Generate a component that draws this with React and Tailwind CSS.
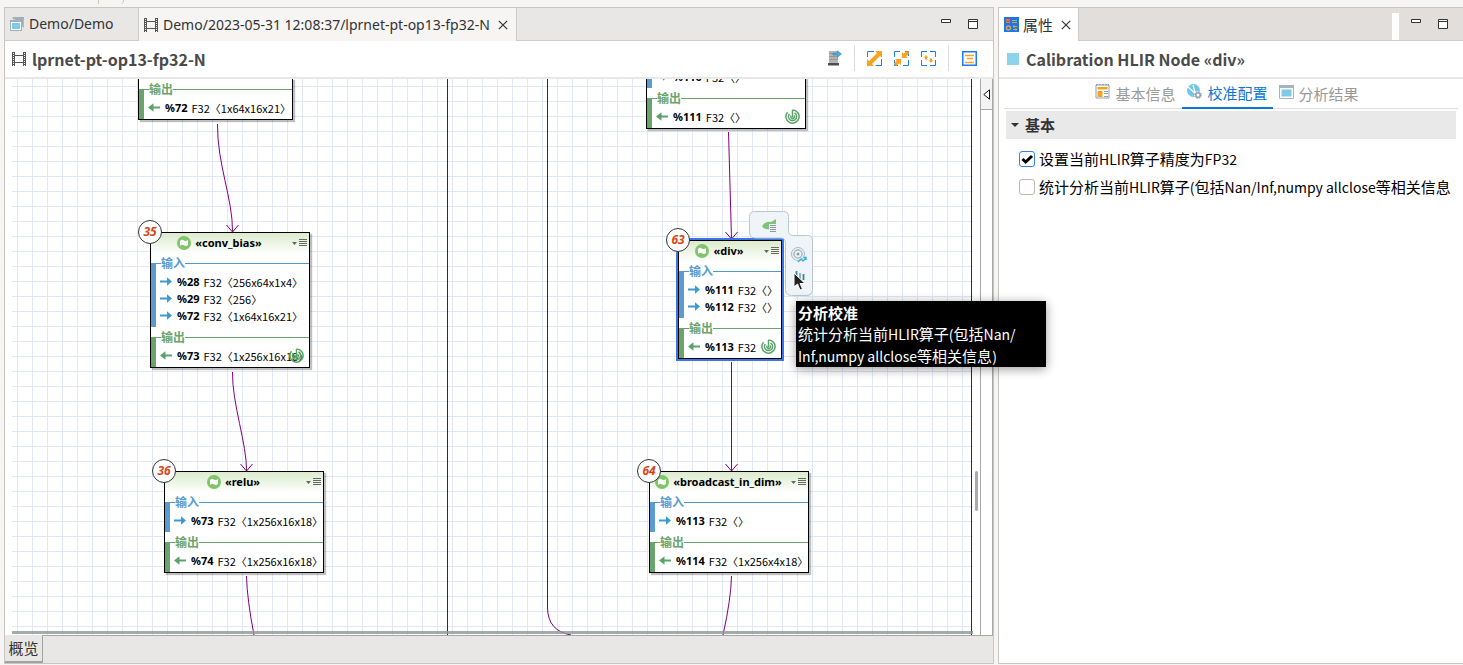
import React from 'react';

const nodes = [
  {
    id: 'n34', x: 126, y: -1, w: 155,
    inputs: [],
    outputs: [{ ref: '%72', type: 'F32', shape: '〈1x64x16x21〉' }],
  },
  {
    id: 'n35', x: 138, y: 153, w: 160, index: 35, title: '«conv_bias»', calibrated: true,
    inputs: [
      { ref: '%28', type: 'F32', shape: '〈256x64x1x4〉' },
      { ref: '%29', type: 'F32', shape: '〈256〉' },
      { ref: '%72', type: 'F32', shape: '〈1x64x16x21〉' },
    ],
    outputs: [{ ref: '%73', type: 'F32', shape: '〈1x256x16x18〉' }],
  },
  {
    id: 'n36', x: 152, y: 392, w: 160, index: 36, title: '«relu»',
    inputs: [{ ref: '%73', type: 'F32', shape: '〈1x256x16x18〉' }],
    outputs: [{ ref: '%74', type: 'F32', shape: '〈1x256x16x18〉' }],
  },
  {
    id: 'n62', x: 634, y: -22, w: 160, calibrated: true,
    inputs: [{ ref: '%110', type: 'F32', shape: '〈〉' }],
    outputs: [{ ref: '%111', type: 'F32', shape: '〈〉' }],
  },
  {
    id: 'n63', x: 666, y: 161, w: 104, index: 63, title: '«div»', calibrated: true, selected: true,
    inputs: [
      { ref: '%111', type: 'F32', shape: '〈〉' },
      { ref: '%112', type: 'F32', shape: '〈〉' },
    ],
    outputs: [{ ref: '%113', type: 'F32', shape: '' }],
  },
  {
    id: 'n64', x: 637, y: 392, w: 160, index: 64, title: '«broadcast_in_dim»',
    inputs: [{ ref: '%113', type: 'F32', shape: '〈〉' }],
    outputs: [{ ref: '%114', type: 'F32', shape: '〈1x256x4x18〉' }],
  },
];

// Latin runs are set a size below the Chinese text around them
const Latin = ({ children }) => <span className="text-[14px]">{children}</span>;

const FilmIcon = () => (
  <svg className="h-[14px] w-[14px] shrink-0" viewBox="0 0 14 14" fill="none" stroke="#555">
    <path d="M1.5 0v14M12.5 0v14" strokeWidth="3" />
    <path d="M1.5 1v13M12.5 1v13" stroke="#fff" strokeWidth="1" strokeDasharray="1 1" />
    <path d="M3 3.5h8M3 10.5h8" />
  </svg>
);

const WindowIcon = () => (
  <svg className="h-[14px] w-[14px] shrink-0" viewBox="0 0 14 14">
    <path d="M3 .5h10.500v10M3 2V0h11v2z" fill="#9fb0bb" stroke="#9fb0bb" strokeWidth=".6" />
    <rect x=".5" y="3.500" width="11" height="10" fill="#fff" stroke="#9fb0bb" />
    <path d="M0 3h12v2H0z" fill="#9fb0bb" />
    <path d="M2 6h8v6H2z" fill="#7dcbe6" />
  </svg>
);

const CloseIcon = () => (
  <svg className="h-[10px] w-[10px]" viewBox="0 0 10 10" stroke="#333" strokeWidth="1.2">
    <path d="M.8.8l8.400 8.400M9.200.8L.8 9.200" />
  </svg>
);

const PanelButtons = () => (
  <div className="flex items-center gap-[17px]">
    <button aria-label="Minimize" className="flex h-4 w-[10px] items-start pt-[3px]">
      <svg className="h-1 w-[10px]" viewBox="0 0 10 4" fill="#fff" stroke="#333">
        <path d="M.5.5h9v3h-9z" />
      </svg>
    </button>
    <button aria-label="Maximize" className="flex h-4 w-[10px] items-start pt-[3px]">
      <svg className="h-[10px] w-[10px]" viewBox="0 0 10 10" fill="#fff" stroke="#333">
        <path d="M.5.5h9v9h-9zM.5 2.500h9" />
      </svg>
    </button>
  </div>
);

const SpiralIcon = () => (
  <svg className="h-[15px] w-[15px]" viewBox="0 0 15 15" fill="none" stroke="#5aa46a" strokeWidth="1.500">
    <path d="M7.500.9A6.600 6.600 0 1 1 2.500 3.200" />
    <path d="M7.500.9V8.500" />
    <path d="M9.500 3.900A4.100 4.100 0 1 1 4.300 5" />
    <path d="M9 6.500a1.800 1.800 0 1 1-2.800.2" />
  </svg>
);

const ArrowIcon = ({ out }) => (
  <svg className="h-[9px] w-3 shrink-0" viewBox="0 0 12 9">
    {out ? (
      <path d="M12 3.500H5.500V.3L0 4.500l5.500 4.200V5.500H12z" fill="#5aa46a" />
    ) : (
      <path d="M0 3.500h7V.3l5 4.200-5 4.200V5.500H0z" fill="#3a9ad2" />
    )}
  </svg>
);

const Section = ({ label, items, out }) => (
  <div className={`relative border-t pt-[9px] pb-[3px] pl-2 ${out ? 'border-[#6aa36c]' : 'border-[#4f98cf]'}`}>
    <div className={`absolute -top-px bottom-0 left-0 w-[5px] ${out ? 'bg-[#6aa36c]' : 'bg-[#5a9bd3]'}`} />
    {label && (
      <span className={`absolute -top-[9px] left-[10px] bg-white text-[12px] leading-4 font-bold ${out ? 'text-[#6aa36c]' : 'text-[#5a9bd3]'}`}>
        {label}
      </span>
    )}
    {items.map((item) => (
      <div key={item.ref} className="flex h-[17px] items-center whitespace-nowrap pl-px">
        <ArrowIcon out={out} />
        <span className="ml-[5px] font-['Noto_Sans',sans-serif] text-[11px] leading-4 font-bold text-black">{item.ref}</span>
        <span className="ml-1 pt-px text-[11px] leading-[14px] text-black">{item.type}{item.shape}</span>
      </div>
    ))}
  </div>
);

const GraphNode = ({ node }) => (
  <div
    className={`absolute border border-black bg-white ${node.selected ? 'ring-2 ring-[#3b74e8]' : 'shadow-[2px_2px_1px_#00000040]'}`}
    style={{ left: node.x, top: node.y, width: node.w }}
  >
    {node.title && (
      <div className="flex h-[30px] items-start justify-center bg-linear-to-b from-[#dcebcd] to-white to-70% pt-[2px]">
        <div className="flex flex-1 items-center justify-center gap-1 pr-1">
          <svg className="h-[14px] w-[14px] shrink-0" viewBox="0 0 14 14">
            <circle cx="7" cy="7" r="7" fill="#82c46b" />
            <path d="M3 5q2-2 4-.5t4-.5v5q-2 1.800-4 .3T3 10z" fill="#fff" />
          </svg>
          <span className="font-['Noto_Sans',sans-serif] text-[11px] leading-4 font-bold text-black">{node.title}</span>
        </div>
        <button aria-label="Node menu" className="mr-[2px] flex h-4 shrink-0 items-center">
          <svg className="h-2 w-[15px]" viewBox="0 0 15 8" fill="#666">
            <path d="M0 3h5L2.500 6zM7 0h8v1H7zM7 2h8v1H7zM7 4h8v1H7zM7 6h8v1H7z" />
          </svg>
        </button>
      </div>
    )}
    {node.inputs.length > 0 && <Section label={node.title && '输入'} items={node.inputs} />}
    <div className="h-[10px]" />
    <Section label="输出" items={node.outputs} out />
    {node.calibrated && (
      <div className="absolute right-[5px] bottom-[4px]">
        <SpiralIcon />
      </div>
    )}
    {node.index && (
      <span className="absolute -top-[13px] -left-[13px] flex h-6 w-6 items-center justify-center rounded-full border border-[#333] bg-white font-['Noto_Sans',sans-serif] text-[12px] leading-4 font-bold text-[#dc4415] italic">
        {node.index}
      </span>
    )}
  </div>
);

const Edges = () => (
  <svg className="absolute inset-0 h-full w-full" fill="none" stroke="#800080">
    <path d="M435.500 0v556M959.500 0v556M535.500 0v529Q536 552 559 556" stroke="#6d0070" />
    <path d="M205.500 45C205 85 221 120 220.500 153M214.500 146l6 7 6-7" />
    <path d="M220.500 293C220 325 235 365 234.500 392M228.500 385l6 7 6-7" />
    <path d="M234.500 497Q235 520 242 556" />
    <path d="M716.500 53L719.500 160M713.500 153l6 7 6-7" />
    <path d="M719.500 283V392M713.500 385l6 7 6-7" />
    <path d="M719.500 497Q719 520 711 556" />
  </svg>
);

// Floating action pad beside the selected node
const ActionPad = () => (
  <div className="absolute top-[132px] left-[737px] h-[86px] w-[64px]">
    <svg className="absolute inset-0 h-full w-full" viewBox="0 0 64 86">
      <path
        d="M5.500.5h29q5 0 5 5v14q0 5 5 5h14q5 0 5 5v49q0 6-6 6h-15q-6 0-6-6V32q0-5-5-5h-25q-6 0-6-6V5.500q0-5 5-5z"
        fill="#eef4f7" stroke="#b9c7d0"
      />
      <path d="M13 15q4-5 9-4l5-3v10h-6q-6 1-8-3z" fill="#7fc377" />
      <path d="M20 13h8v10h-8z" fill="#eef4f7" />
      <path d="M21 14.500h6M21 16.500h6M21 18.500h6M21 20.500h6" stroke="#8a97a0" />
      <circle cx="49" cy="43" r="6.500" fill="none" stroke="#a9b7c0" />
      <circle cx="49" cy="43" r="4" fill="none" stroke="#a9b7c0" strokeWidth="1.500" />
      <circle cx="49" cy="43" r="1.500" fill="#8b9aa5" />
      <path d="M49 51l3-3 2 2 3-3M54.500 46.500H57V49" fill="none" stroke="#36b0dc" strokeWidth="1.300" />
      <path d="M47.500 68v-8M54.500 69v-6" stroke="#2f86c2" strokeWidth="1.800" />
      <path d="M51 69v-7" stroke="#9aa7b0" strokeWidth="1.800" />
    </svg>
    <svg className="absolute top-[61px] left-[44px] h-[20px] w-[13px]" viewBox="0 0 13 20">
      <path d="M1 1v14l3.500-3 2.500 6 2.500-1L7 11.500h5z" fill="#222" stroke="#fff" />
    </svg>
  </div>
);

const Editor = () => (
  <section className="flex min-w-0 flex-col border border-[#c9c5c1] bg-white">
    <div className="flex h-[33px] shrink-0 items-stretch border-b border-[#cfccc9] bg-[#e8e7e6] font-['Noto_Sans',sans-serif] text-[14px] leading-5 text-[#333]">
      <button className="flex w-[134px] items-center gap-[5px] border-r border-[#cfccc9] pl-[5px]">
        <WindowIcon />
        Demo/Demo
      </button>
      <div className="-mb-px flex items-center border-r border-[#cfccc9] bg-[#f6f5f4] pr-2 pl-[5px]">
        <FilmIcon />
        <span className="ml-[5px] whitespace-nowrap">Demo/2023-05-31 12:08:37/lprnet-pt-op13-fp32-N</span>
        <button aria-label="Close" className="ml-2"><CloseIcon /></button>
      </div>
      <div className="ml-auto pt-2 pr-[15px]"><PanelButtons /></div>
    </div>

    <div className="flex h-[38px] shrink-0 items-center border-b-2 border-[#e8e8e8] pl-[7px]">
      <FilmIcon />
      <h1 className="ml-[6px] text-[16px] leading-5 font-bold text-[#4a4a4a]">lprnet-pt-op13-fp32-N</h1>
      <div className="ml-auto flex items-center pr-4 pb-[2px]">
        <button aria-label="Export">
          <svg className="h-4 w-4" viewBox="0 0 16 16">
            <path d="M2 1h9v13H2z" fill="#b4b4b4" />
            <path d="M2 3.500h9M2 6.500h9M2 9.500h9" stroke="#8a8a8a" strokeWidth=".7" />
            <path d="M1 13h11v2.500H1z" fill="#4d4d4d" />
            <path d="M6 3h4.500V.8L14.500 4l-4 3.200V5H6z" fill="#4ab4e4" stroke="#2a7ba6" strokeWidth=".5" />
          </svg>
        </button>
        <div className="mr-3 ml-[11px] h-[26px] w-px bg-[#dcdcdc]" />
        <div className="flex gap-3">
          <button aria-label="Expand">
            <svg className="h-[15px] w-[15px]" viewBox="0 0 15 15" fill="none" stroke="#1d7cf2">
              <path d="M.5 6V.5H7M8.500 14.500h6V8M.5 9v5.500M14.500 5V.5" />
              <path d="M3 12l9-9" stroke="#f8a31f" strokeWidth="4" />
              <path d="M8 0h7v7zM0 8v7h7z" fill="#f8a31f" stroke="none" />
            </svg>
          </button>
          <button aria-label="Collapse">
            <svg className="h-[15px] w-[15px]" viewBox="0 0 15 15" fill="none" stroke="#1d7cf2">
              <path d="M.5 6V.5H6M9 14.500h5.500V9M.5 9v5.500H4M11 .5h3.500V5" />
              <path d="M1 14l4-4M10 5l4-4" stroke="#f8a31f" strokeWidth="3.500" />
              <path d="M8 1v6h6zM1 8h6v6z" fill="#f8a31f" stroke="none" />
            </svg>
          </button>
          <button aria-label="Fit">
            <svg className="h-[15px] w-[15px]" viewBox="0 0 15 15" fill="none" stroke="#1d7cf2">
              <path d="M.5 6V.5H6M9 .5h5.500V6M14.500 9v5.500H9M6 14.500H.5V9" />
              <path d="M5 4l2.200 2.500H6V8.500H4V6.500H2.800zM10 12L7.800 9.500H9v-2h2v2h1.200z" fill="#f8a31f" stroke="none" />
            </svg>
          </button>
        </div>
        <div className="mr-[13px] ml-3 h-[26px] w-px bg-[#dcdcdc]" />
        <button aria-label="Outline">
          <svg className="h-[15px] w-[15px]" viewBox="0 0 15 15" fill="none" stroke="#f8a31f">
            <path d="M.75.75h13.500v13.500H.75z" fill="#fff" stroke="#1d7cf2" strokeWidth="1.500" />
            <path d="M3 4.500h9M5 7.500h6M3 11.500h9" strokeWidth="1.300" />
          </svg>
        </button>
      </div>
    </div>

    <div className="flex min-h-0 flex-1 pl-[7px]">
      <div className="relative min-w-0 flex-1 overflow-hidden bg-[linear-gradient(to_right,#e1e6f8_1px,transparent_1px),linear-gradient(to_bottom,#e1e6f8_1px,transparent_1px)] bg-[size:15px_15px] bg-[position:5px_7px]">
        <Edges />
        {nodes.map((node) => (
          <GraphNode key={node.id} node={node} />
        ))}
        <ActionPad />
        <div className="absolute inset-x-0 bottom-px h-[3px] bg-[#8f9696]/80" />
      </div>
      <div className="flex w-[7px] items-start justify-center">
        <div className="mt-[392px] h-10 w-[3px] rounded-full bg-[#a8acac]" />
      </div>
      <div className="w-[13px] border-x border-[#a6a8a8]">
        <button aria-label="Show palette" className="flex h-[31px] w-full items-center justify-center border-b border-[#a6a8a8] bg-[#f4f4f4]">
          <svg className="h-[11px] w-[7px]" viewBox="0 0 7 11" fill="#fff" stroke="#111">
            <path d="M6.500.8v9.400L.8 5.500z" />
          </svg>
        </button>
      </div>
    </div>

    <div className="flex h-7 shrink-0 bg-[#e8e7e6]">
      <button className="w-[38px] border-r border-b-2 border-[#a0a3a3] text-[15px] leading-5 text-[#333]">概览</button>
      <div className="flex-1 border-t border-[#a6a8a8]" />
    </div>
  </section>
);

const Properties = () => (
  <section className="flex min-w-0 flex-col border border-r-0 border-[#c9c5c1] bg-white text-[15px] leading-5">
    <div className="flex h-[33px] shrink-0 border-b border-[#cfccc9] bg-[#e1dedb]">
      <div className="-mb-px flex w-[80px] items-center border-r border-[#cfccc9] bg-white pl-[5px] text-[#333]">
        <svg className="h-[15px] w-[15px]" viewBox="0 0 15 15">
          <path d="M0 0h15v15H0z" fill="#1476f2" />
          <path d="M2 2h4v4H2z" fill="#f47b20" />
          <path d="M2.500 3.500l1.500 1.500 3-3" fill="none" stroke="#d33" />
          <path d="M8 3.500h5M8 5.500h5M9 9.500h4M9 12.500h4M10 8v3M12 11v3" stroke="#d8a24a" />
          <circle cx="4.500" cy="11" r="2" fill="none" stroke="#d8a24a" strokeWidth="1.500" />
        </svg>
        <span className="ml-1">属性</span>
        <button aria-label="Close" className="ml-2"><CloseIcon /></button>
      </div>
      <div className="mt-[5px] ml-auto w-[7px] bg-white" />
      <div className="pt-2 pr-[15px] pl-3"><PanelButtons /></div>
    </div>

    <div className="flex h-[38px] shrink-0 items-center border-b-2 border-[#e8e8e8] pl-2">
      <div className="h-3 w-3 bg-[#8ed3ec]" />
      <h2 className="ml-[7px] text-[16px] leading-5 font-bold text-[#4a4a4a]">Calibration HLIR Node «div»</h2>
    </div>

    <div className="mr-[5px] ml-[5px] flex h-[30px] shrink-0 justify-center border-b border-[#dedede] pr-[9px] text-[#999]">
      <button className="flex items-center gap-[5px] px-[7px]">
        <svg className="mb-1 h-[15px] w-[15px]" viewBox="0 0 15 15">
          <path d="M1 1h13v13H1z" fill="#fff" stroke="#8fa0ac" />
          <path d="M1 0h13" stroke="#8fa0ac" strokeDasharray="2 1" strokeWidth="2" />
          <path d="M2.500 3h10v2.500h-10zM2.500 7h5v6h-5z" fill="#f8a31f" />
          <path d="M9 7.500h4M9 9.500h4M9 12.500h4" stroke="#8fa0ac" />
        </svg>
        基本信息
      </button>
      <button className="-mb-px flex items-center gap-[5px] border-b-2 border-[#0a78d7] px-[5px] text-[#0a78d7]">
        <svg className="mb-1 h-[15px] w-[15px]" viewBox="0 0 15 15" fill="none">
          <circle cx="6.500" cy="6.500" r="6.500" fill="#6cc8e8" />
          <path d="M1 3l9 8M6 1l3 11" stroke="#fff" strokeWidth="1.200" />
          <circle cx="11" cy="11" r="4" fill="#fff" />
          <circle cx="11" cy="11" r="2.300" stroke="#93a3ae" strokeWidth="1.600" />
          <circle cx="11" cy="11" r="3.500" stroke="#93a3ae" strokeDasharray="1.500 1.250" />
        </svg>
        校准配置
      </button>
      <button className="flex items-center gap-[5px] px-[6px]">
        <svg className="mb-1 h-[14px] w-[15px]" viewBox="0 0 15 14">
          <path d="M.5.5h14v13H.5z" fill="#fff" stroke="#a6b4be" />
          <path d="M0 0h15v3H0z" fill="#a6b4be" />
          <path d="M2.500 4.500h10v7h-10z" fill="#7dcbe6" />
        </svg>
        分析结果
      </button>
    </div>

    <div className="mt-[2px] mr-[7px] ml-[7px] flex h-7 shrink-0 items-center bg-[#e9e9e9] pl-[5px]">
      <svg className="h-1 w-2" viewBox="0 0 8 4"><path d="M0 0h8L4 4z" fill="#333" /></svg>
      <h3 className="ml-[6px] font-bold text-[#333]">基本</h3>
    </div>

    <div className="flex flex-col gap-2 pt-[10px] pl-5 text-black">
      <div className="flex items-center gap-1">
        <div className="relative h-4 w-4 shrink-0">
          <input id="fp32" type="checkbox" defaultChecked className="peer block h-4 w-4 appearance-none rounded-[3px] border border-[#bdb6af] bg-white checked:border-[#3584e4]" />
          <svg className="pointer-events-none absolute inset-0 hidden h-4 w-4 peer-checked:block" viewBox="0 0 16 16">
            <path d="M3.500 8l3.200 3 6.300-6" fill="none" stroke="#000" strokeWidth="3" />
          </svg>
        </div>
        <label htmlFor="fp32" className="whitespace-nowrap">
          设置当前<Latin>HLIR</Latin>算子精度为<Latin>FP32</Latin>
        </label>
      </div>
      <div className="flex items-center gap-1">
        <div className="relative h-4 w-4 shrink-0">
          <input id="stats" type="checkbox" className="peer block h-4 w-4 appearance-none rounded-[3px] border border-[#bdb6af] bg-white checked:border-[#3584e4]" />
          <svg className="pointer-events-none absolute inset-0 hidden h-4 w-4 peer-checked:block" viewBox="0 0 16 16">
            <path d="M3.500 8l3.200 3 6.300-6" fill="none" stroke="#000" strokeWidth="3" />
          </svg>
        </div>
        <label htmlFor="stats" className="whitespace-nowrap">
          统计分析当前<Latin>HLIR</Latin>算子<Latin>(</Latin>包括<Latin>Nan/Inf,numpy allclose</Latin>等相关信息
        </label>
      </div>
    </div>
  </section>
);

const App = () => {
  return (
    <div className="relative grid h-screen grid-cols-[990fr_465fr] gap-1 overflow-hidden bg-[#f6f5f4] pt-[7px] pb-px pl-1 font-['Noto_Sans_CJK_SC',sans-serif]">
      <div className="absolute top-0 left-[98px] h-1 w-[26px] rounded-br-sm border-r border-l border-[#c9c5c1]" />
      <Editor />
      <Properties />
      <div role="tooltip" className="absolute top-[301px] left-[796px] w-[250px] bg-black px-[2px] pt-px text-[15px] leading-[21px] text-white shadow-[0_2px_10px_#00000066]">
        <strong className="block">分析校准</strong>
        统计分析当前<Latin>HLIR</Latin>算子<Latin>(</Latin>包括<Latin>Nan/</Latin><br />
        <Latin>Inf,numpy allclose</Latin>等相关信息<Latin>)</Latin>
      </div>
    </div>
  );
};

export default App;
